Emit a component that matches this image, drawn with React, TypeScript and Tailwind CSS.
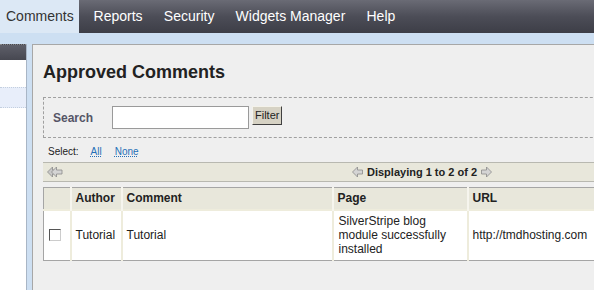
import React from 'react';

const ArrowLeft = ({ double = false }: { double?: boolean }) => (
  <svg width={double ? 16 : 11} height="12" viewBox={double ? '0 0 16 12' : '0 0 11 12'}>
    {double && <path d="M5.5 1 L0.5 6 L5.5 11 L5.5 8 L8 8 L8 4 L5.5 4 Z" fill="#c8c8c8" stroke="#8a8a8a" strokeWidth="0.8" />}
    <path
      d={double ? 'M9.5 1 L4.5 6 L9.5 11 L9.5 8 L15 8 L15 4 L9.5 4 Z' : 'M5.5 1 L0.5 6 L5.5 11 L5.5 8 L10.5 8 L10.5 4 L5.5 4 Z'}
      fill="#d4d4d4"
      stroke="#8a8a8a"
      strokeWidth="0.8"
    />
  </svg>
);

const ArrowRight = () => (
  <svg width="11" height="12" viewBox="0 0 11 12">
    <path d="M5.5 1 L10.5 6 L5.5 11 L5.5 8 L0.5 8 L0.5 4 L5.5 4 Z" fill="#d4d4d4" stroke="#8a8a8a" strokeWidth="0.8" />
  </svg>
);

const navItems = ['Reports', 'Security', 'Widgets Manager', 'Help'];

export default function App() {
  return (
    <div className="w-[594px] h-[290px] overflow-hidden bg-[#cddff2] font-['Liberation_Sans',Arial,sans-serif] text-[#222]">
      {/* Top menu */}
      <div className="flex h-[33px]">
        <div className="w-[79px] bg-[#dce8f5] pl-[6px] text-[14px] leading-[33px] text-[#333]">Comments</div>
        <div className="flex flex-1 pl-[4px] bg-gradient-to-b from-[#6a6b75] via-[#4c4d57] to-[#3d3e47]">
          {navItems.map((item) => (
            <div key={item} className="px-[10.6px] text-[14px] leading-[33px] text-white whitespace-nowrap">
              {item}
            </div>
          ))}
        </div>
      </div>

      <div className="flex mt-[11px] h-[246px]">
        {/* Left panel */}
        <div className="w-[27px] shrink-0 flex flex-col bg-white border-r border-[#a9b6c6]">
          <div className="h-[16px] border-t border-dotted border-[#888] bg-gradient-to-b from-[#5e5f69] to-[#474851]" />
          <div className="h-[27px] bg-white" />
          <div className="h-[21px] bg-[#e8eefa] border-y border-dotted border-[#c3cfdf]" />
          <div className="flex-1 bg-white" />
        </div>
        <div className="w-[5px] shrink-0" />

        {/* Main panel */}
        <div className="flex-1 min-w-0 bg-[#efefef] border-l border-t border-[#a7a7a7] pl-[10px]">
          <h1 className="mt-[17px] h-[20px] text-[18px] font-bold leading-[20px] text-[#222] whitespace-nowrap">
            Approved Comments
          </h1>

          {/* Search fieldset */}
          <div className="mt-[15px] w-[600px] h-[41px] border border-dashed border-[#a0a0a0] flex items-center pl-[9px]">
            <span className="w-[59px] text-[12px] font-bold text-[#556]">Search</span>
            <div className="w-[137px] h-[23px] bg-white border border-[#9a9a9a]" />
            <button className="ml-[3px] mt-[-4px] h-[19px] px-[2px] text-[11px] text-[#222] bg-[#d6d2c4] border border-t-[#f4f2ea] border-l-[#f4f2ea] border-b-[#404040] border-r-[#404040]">
              Filter
            </button>
          </div>

          {/* Select */}
          <div className="mt-[6px] h-[14px] flex items-center text-[10px] pl-[5px]">
            <span>Select:</span>
            <span className="ml-[12px] text-[#2570b8] underline decoration-dotted">All</span>
            <span className="ml-[13px] text-[#2570b8] underline decoration-dotted">None</span>
          </div>

          {/* Pagination */}
          <div className="mt-[4px] h-[20px] bg-[#e8e7db] border-y border-[#b8b8b0] flex items-center relative">
            <div className="pl-[4px] flex items-center">
              <ArrowLeft double />
            </div>
            <div className="absolute left-[309px] top-0 h-full flex items-center gap-[4px] text-[11px] font-bold text-[#222] whitespace-nowrap">
              <ArrowLeft />
              <span>Displaying 1 to 2 of 2</span>
              <ArrowRight />
            </div>
          </div>

          {/* Table */}
          <table className="mt-[5px] w-[560px] border-collapse border border-[#a5a5a5] text-[12px] table-fixed">
            <colgroup>
              <col className="w-[27px]" />
              <col className="w-[51px]" />
              <col className="w-[211px]" />
              <col className="w-[135px]" />
              <col className="w-[136px]" />
            </colgroup>
            <thead>
              <tr className="h-[22px] bg-[#e8e7db]">
                <th className="border-r-2 border-[#f6f5ee]" />
                <th className="border-r-2 border-[#f6f5ee] text-left font-bold px-[4px]">Author</th>
                <th className="border-r-2 border-[#f6f5ee] text-left font-bold px-[4px]">Comment</th>
                <th className="border-r-2 border-[#f6f5ee] text-left font-bold px-[4px]">Page</th>
                <th className="text-left font-bold px-[4px]">URL</th>
              </tr>
            </thead>
            <tbody>
              <tr className="h-[51px] bg-white border-t-2 border-[#eeecdc]">
                <td className="border-r-2 border-[#eeecdc] px-[4px]">
                  <div className="w-[12px] h-[12px] border border-t-[#555] border-l-[#555] border-b-[#ccc] border-r-[#ccc] bg-white ml-[1px]" />
                </td>
                <td className="border-r-2 border-[#eeecdc] px-[4px] whitespace-nowrap">Tutorial</td>
                <td className="border-r-2 border-[#eeecdc] px-[4px]">Tutorial</td>
                <td className="border-r-2 border-[#eeecdc] px-[5px] leading-[14px]">
                  SilverStripe blog module successfully installed
                </td>
                <td className="px-[4px] whitespace-nowrap">http://tmdhosting.com</td>
              </tr>
            </tbody>
          </table>
        </div>
      </div>
    </div>
  );
}
